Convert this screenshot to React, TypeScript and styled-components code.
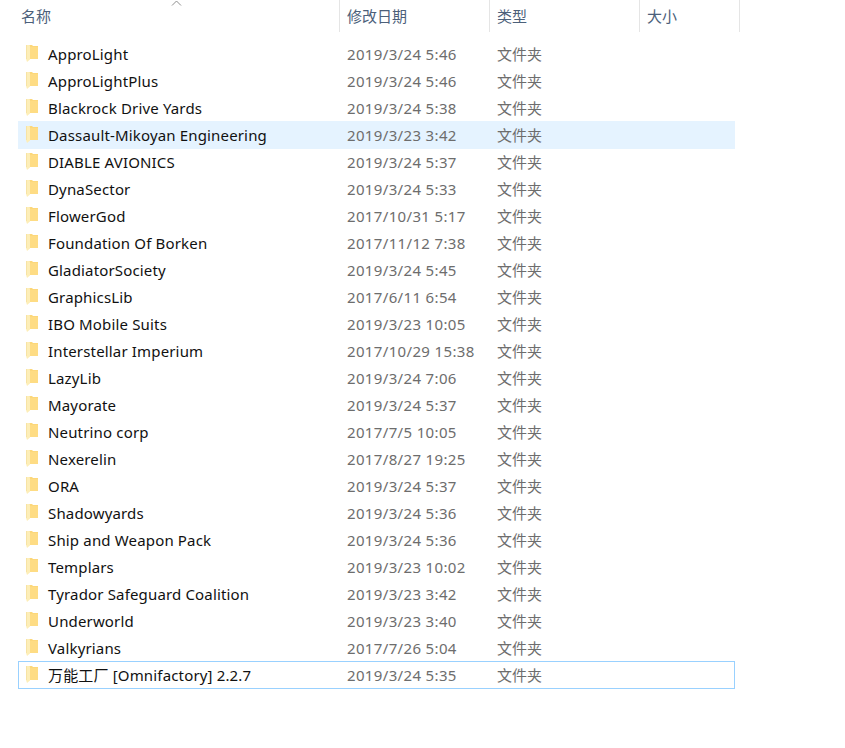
import React from "react"
import styled, { createGlobalStyle } from "styled-components"

const GlobalStyle = createGlobalStyle`
  html, body {
    margin: 0;
    padding: 0;
    background: #ffffff;
  }
  body {
    font-family: "Noto Sans", "Noto Sans CJK SC", sans-serif;
  }
`

const folders = [
  ["ApproLight", "2019/3/24 5:46"],
  ["ApproLightPlus", "2019/3/24 5:46"],
  ["Blackrock Drive Yards", "2019/3/24 5:38"],
  ["Dassault-Mikoyan Engineering", "2019/3/23 3:42"],
  ["DIABLE AVIONICS", "2019/3/24 5:37"],
  ["DynaSector", "2019/3/24 5:33"],
  ["FlowerGod", "2017/10/31 5:17"],
  ["Foundation Of Borken", "2017/11/12 7:38"],
  ["GladiatorSociety", "2019/3/24 5:45"],
  ["GraphicsLib", "2017/6/11 6:54"],
  ["IBO Mobile Suits", "2019/3/23 10:05"],
  ["Interstellar Imperium", "2017/10/29 15:38"],
  ["LazyLib", "2019/3/24 7:06"],
  ["Mayorate", "2019/3/24 5:37"],
  ["Neutrino corp", "2017/7/5 10:05"],
  ["Nexerelin", "2017/8/27 19:25"],
  ["ORA", "2019/3/24 5:37"],
  ["Shadowyards", "2019/3/24 5:36"],
  ["Ship and Weapon Pack", "2019/3/24 5:36"],
  ["Templars", "2019/3/23 10:02"],
  ["Tyrador Safeguard Coalition", "2019/3/23 3:42"],
  ["Underworld", "2019/3/23 3:40"],
  ["Valkyrians", "2017/7/26 5:04"],
  ["万能工厂 [Omnifactory] 2.2.7", "2019/3/24 5:35"],
]

const Page = styled.div`
  width: 845px;
  height: 748px;
  overflow: hidden;
  background: #fff;
`

const Header = styled.div`
  display: flex;
  height: 32px;
  position: relative;
`

const Column = styled.div<{ $width: number }>`
  width: ${(p) => p.$width}px;
  box-sizing: border-box;
  padding: 0 0 0 7px;
  border-right: 1px solid #e5e5e5;
  color: #4c607a;
  font-size: 15px;
  line-height: 32px;
`

const NameColumn = styled(Column)`
  padding-left: 21px;
`

const SortArrow = styled.svg`
  position: absolute;
  left: 171px;
  top: 0;
`

const List = styled.div`
  padding: 8px 0 0 18px;
`

const Row = styled.div<{ $state?: "hover" | "focus" }>`
  display: flex;
  align-items: center;
  box-sizing: border-box;
  width: 717px;
  height: 28px;
  margin-bottom: -1px;
  background: ${(p) => (p.$state === "hover" ? "#e5f3ff" : "transparent")};
  border: 1px solid ${(p) => (p.$state === "focus" ? "#99d1ff" : "transparent")};
`

const Icon = styled.svg`
  flex: none;
  margin: 0 0 1px 7px;
`

const Name = styled.span`
  width: 299px;
  margin-left: 10px;
  color: #111;
  font-size: 15px;
  line-height: 20px;
  letter-spacing: 0.16px;
  white-space: nowrap;
`

const Modified = styled.span`
  width: 150px;
  color: #6d6d6d;
  font-size: 15px;
  line-height: 20px;
  letter-spacing: 0.35px;
  white-space: nowrap;
`

const Kind = styled.span`
  margin-bottom: 1px;
  color: #6d6d6d;
  font-size: 15px;
  line-height: 20px;
`

const FolderIcon = () => (
  <Icon width="12" height="17" viewBox="0 0 12 17">
    <path d="M0 0h6l1 1h5v13H4z" fill="#fcd77a" />
    <path d="M4 2h8v12H4z" fill="#fedc84" />
    <path d="M0 0h3.5l.5 1v13.5L1 17 0 14z" fill="#fdeeb8" />
    <path d="M0 0h1v14H0z" fill="#f7e3a4" />
  </Icon>
)

const App = () => (
  <Page>
    <GlobalStyle />
    <Header>
      <NameColumn $width={340}>名称</NameColumn>
      <Column $width={150}>修改日期</Column>
      <Column $width={150}>类型</Column>
      <Column $width={100}>大小</Column>
      <SortArrow width="11" height="7" viewBox="0 0 11 7">
        <path d="M1 5.5l4.5-4.5 4.5 4.5" fill="none" stroke="#8f8f8f" />
      </SortArrow>
    </Header>
    <List>
      {folders.map(([name, date], i) => (
        <Row key={name} $state={i === 3 ? "hover" : i === 23 ? "focus" : undefined}>
          <FolderIcon />
          <Name>{name}</Name>
          <Modified>{date}</Modified>
          <Kind>文件夹</Kind>
        </Row>
      ))}
    </List>
  </Page>
)

export default App
